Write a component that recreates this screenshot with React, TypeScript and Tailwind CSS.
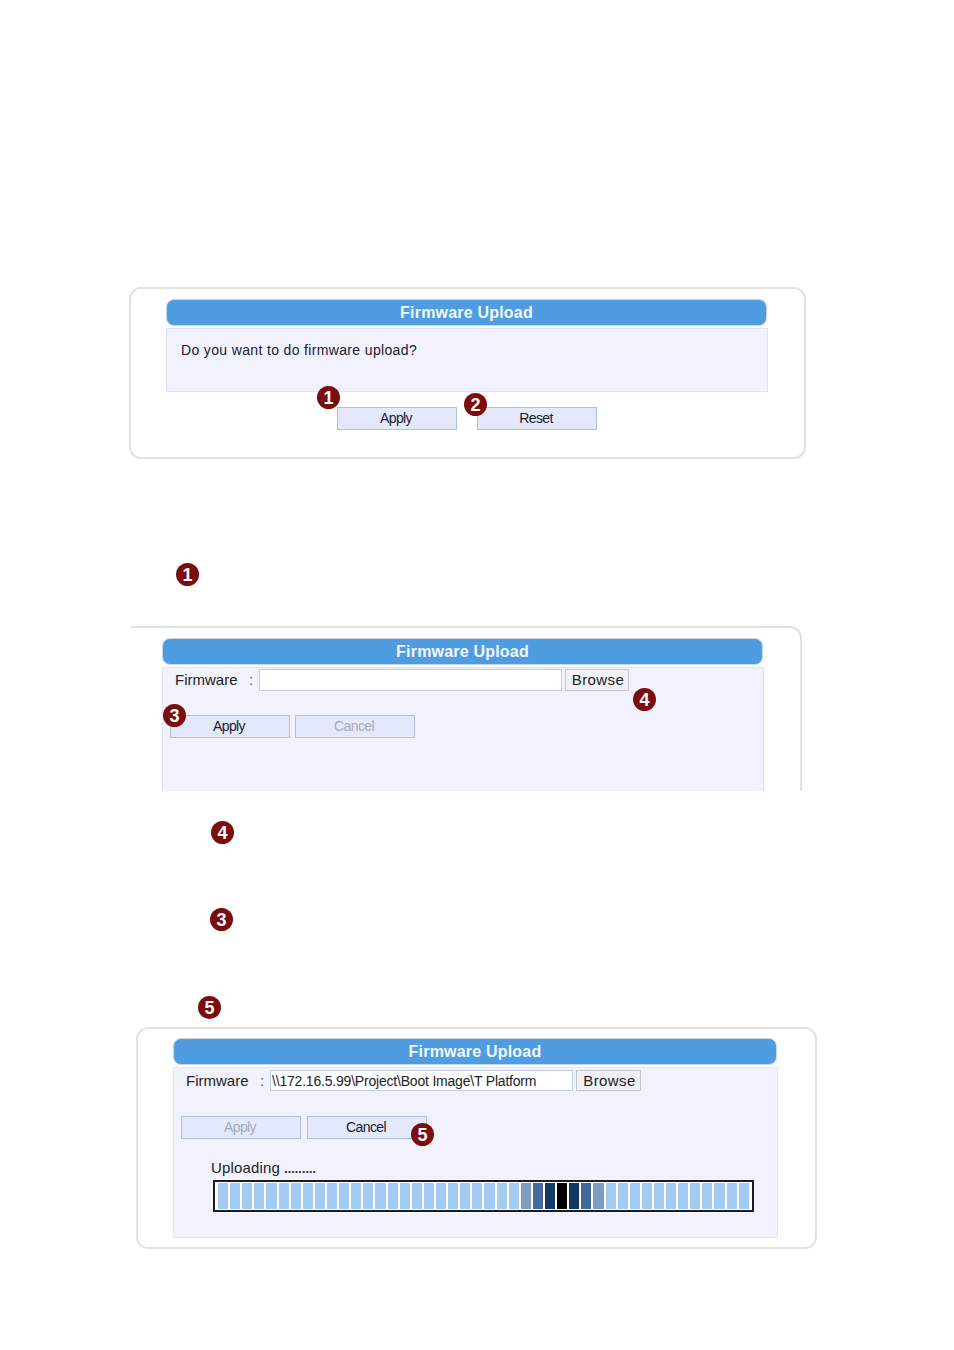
import React from "react";

const FONT = "font-['Liberation_Sans',Arial,sans-serif]";

function Badge({ n, className = "" }: { n: number; className?: string }) {
  return (
    <div
      className={`flex h-[23px] w-[23px] items-center justify-center rounded-full bg-[#7b0d0f] text-[18px] leading-none font-bold text-white ${className}`}
    >
      {n}
    </div>
  );
}

function Header() {
  return (
    <div className="flex h-[27px] w-full items-center justify-center rounded-[8px] border border-[#c4d8ee] bg-[#4f9de0] text-[16px] font-bold tracking-[0.2px] text-[#f2f7fc]">
      Firmware Upload
    </div>
  );
}

function Btn({ label, disabled = false }: { label: string; disabled?: boolean }) {
  return (
    <div
      className={`flex h-[23px] w-[120px] items-center justify-center border border-[#b4c0da] bg-[#e3e8fb] pr-[2px] text-[14px] tracking-[-0.6px] ${disabled ? "text-[#a6abb8]" : "text-[#1c1c2a]"}`}
    >
      {label}
    </div>
  );
}

function FileRow({ value, inputClass, browseClass }: { value?: string; inputClass: string; browseClass: string }) {
  return (
    <div className="flex items-center pl-[12px] text-[15px] leading-[20px] text-[#222]">
      <span className="w-[74px] shrink-0">Firmware</span>
      <span className="w-[10px] shrink-0 text-[#555]">:</span>
      <div className={`flex items-center border border-[#c3cde0] bg-white pl-[1px] text-[14px] tracking-[-0.2px] whitespace-nowrap ${inputClass}`}>
        {value}
      </div>
      <div className={`ml-[3px] flex items-center justify-center border border-[#c3c6d0] bg-[#f0f0f5] pl-[2px] text-[15px] tracking-[0.4px] ${browseClass}`}>
        Browse
      </div>
    </div>
  );
}

const DARK: Record<number, string> = {
  25: "bg-[#7d9cc0]",
  26: "bg-[#44699a]",
  27: "bg-[#143a6a]",
  28: "bg-black",
  29: "bg-[#0e3766]",
  30: "bg-[#40699a]",
  31: "bg-[#7c9ec6]",
};

function Progress() {
  return (
    <div className="ml-[39px] mt-[2px] flex h-[32px] w-[541px] gap-[2px] border-2 border-[#1c1c1c] bg-white py-[1px] pl-[3px] pr-[3px]">
      {Array.from({ length: 44 }).map((_, i) => (
        <div key={i} className={`flex-1 ${DARK[i] ?? "bg-[#a3cbf3]"}`} />
      ))}
    </div>
  );
}

export default function App() {
  return (
    <div className={`${FONT} h-[1350px] w-[954px] overflow-hidden bg-white pt-[287px]`}>
      {/* Panel 1 */}
      <section className="relative ml-[129px] h-[172px] w-[677px] rounded-[12px] border-2 border-[#e2e2e2] px-[35px] pt-[10px]">
        <div className="w-[601px]">
          <Header />
        </div>
        <div className="mt-[2px] h-[64px] w-[602px] border border-[#dbe3fa] bg-[#f1f2fd] pl-[14px] pt-[11px] text-[14px] tracking-[0.35px] text-[#20202c]">
          Do you want to do firmware upload?
        </div>
        <div className="ml-[171px] mt-[15px] flex gap-[20px]">
          <Btn label="Apply" />
          <Btn label="Reset" />
        </div>
        <Badge n={1} className="absolute left-[186px] top-[97px]" />
        <Badge n={2} className="absolute left-[333px] top-[104px]" />
      </section>

      <Badge n={1} className="ml-[176px] mt-[104px]" />

      {/* Panel 2 */}
      <section className="relative ml-[131px] mt-[40px] h-[165px] w-[671px] rounded-tr-[12px] border-t-2 border-r-2 border-[#e2e2e2] pl-[31px] pr-[37px] pt-[10px]">
        <div className="w-[601px]">
          <Header />
        </div>
        <div className="mt-[2px] h-[124px] w-[602px] border-x border-t border-[#dbe3fa] bg-[#f1f2fd] pt-[1px]">
          <FileRow inputClass="h-[22px] w-[303px]" browseClass="h-[22px] w-[64px]" />
          <div className="ml-[7px] mt-[24px] flex gap-[5px]">
            <Btn label="Apply" />
            <Btn label="Cancel" disabled />
          </div>
        </div>
        <Badge n={3} className="absolute left-[32px] top-[76px]" />
        <Badge n={4} className="absolute left-[502px] top-[60px]" />
      </section>

      <Badge n={4} className="ml-[211px] mt-[30px]" />
      <Badge n={3} className="ml-[210px] mt-[64px]" />
      <Badge n={5} className="ml-[198px] mt-[65px]" />

      {/* Panel 3 */}
      <section className="relative ml-[136px] mt-[8px] h-[222px] w-[681px] rounded-[12px] border-2 border-[#e2e2e2] pl-[35px] pt-[9px]">
        <div className="w-[604px]">
          <Header />
        </div>
        <div className="mt-[2px] h-[171px] w-[605px] border border-[#e2e6f8] bg-[#f1f2fd] pt-[2px]">
          <FileRow
            inputClass="h-[21px] w-[303px]"
            browseClass="h-[21px] w-[65px]"
            value="\\172.16.5.99\Project\Boot Image\T Platform"
          />
          <div className="ml-[7px] mt-[25px] flex gap-[6px]">
            <Btn label="Apply" disabled />
            <Btn label="Cancel" />
          </div>
          <div className="ml-[37px] mt-[20px] text-[15px] leading-[18px] tracking-[0.15px] text-[#222]">
            Uploading <span className="text-[12px] font-bold tracking-[0.2px]">.........</span>
          </div>
          <Progress />
        </div>
        <Badge n={5} className="absolute left-[273px] top-[94px]" />
      </section>
    </div>
  );
}
